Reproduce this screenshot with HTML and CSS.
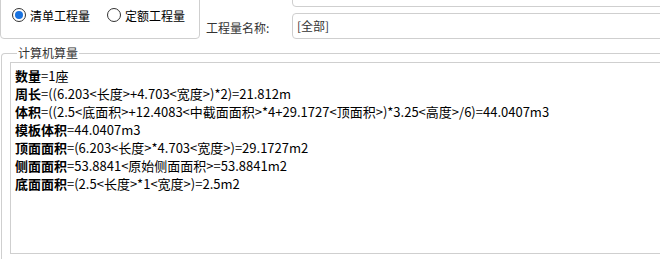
FILE: index.html
```html
<!DOCTYPE html>
<html lang="zh-CN">
<head>
  <meta charset="UTF-8" />
  <title>计算机算量</title>
  <link rel="stylesheet" href="styles.css">
</head>
<body>
  <div class="top-row">
    <div class="radio-box">
      <label class="radio"><span class="dot checked"></span>清单工程量</label>
      <label class="radio"><span class="dot"></span>定额工程量</label>
    </div>
    <div class="name-label">工程量名称:</div>
    <div class="inputs">
      <div class="field field-top"></div>
      <div class="field">[全部]</div>
    </div>
  </div>

  <fieldset class="calc-group">
    <legend>计算机算量</legend>
    <div class="calc-box">
      <div class="line"><b>数量</b>=1座</div>
      <div class="line"><b>周长</b>=((6.203&lt;长度&gt;+4.703&lt;宽度&gt;)*2)=21.812m</div>
      <div class="line"><b>体积</b>=((2.5&lt;底面积&gt;+12.4083&lt;中截面面积&gt;*4+29.1727&lt;顶面积&gt;)*3.25&lt;高度&gt;/6)=44.0407m3</div>
      <div class="line"><b>模板体积</b>=44.0407m3</div>
      <div class="line"><b>顶面面积</b>=(6.203&lt;长度&gt;*4.703&lt;宽度&gt;)=29.1727m2</div>
      <div class="line"><b>侧面面积</b>=53.8841&lt;原始侧面面积&gt;=53.8841m2</div>
      <div class="line"><b>底面面积</b>=(2.5&lt;长度&gt;*1&lt;宽度&gt;)=2.5m2</div>
    </div>
  </fieldset>
</body>
</html>
```

FILE: styles.css
```css
* {
  box-sizing: border-box;
}

html, body {
  margin: 0;
  width: 660px;
  height: 259px;
  overflow: hidden;
  background: #fff;
}

body {
  font-family: "Noto Sans CJK SC", "Microsoft YaHei", sans-serif;
  font-size: 12px;
  color: #000;
}

.top-row {
  display: flex;
  align-items: flex-start;
  height: 46px;
}

.radio-box {
  width: 200px;
  height: 49px;
  margin-top: -10px;
  padding: 16px 0 0 11px;
  border: 1px solid #cfcfcf;
  border-radius: 4px;
  display: flex;
  gap: 17px;
  flex-shrink: 0;
}

.radio {
  display: flex;
  align-items: center;
  gap: 4px;
  height: 16px;
}

.dot {
  width: 14px;
  height: 14px;
  border: 1px solid #333;
  border-radius: 50%;
  background: #fff;
  display: flex;
  align-items: center;
  justify-content: center;
}

.dot.checked::after {
  content: "";
  width: 8px;
  height: 8px;
  border-radius: 50%;
  background: #1a73e0;
}

.name-label {
  width: 92px;
  padding: 19px 0 0 6px;
  color: #333;
  flex-shrink: 0;
}

.inputs {
  flex: 1;
  display: flex;
  flex-direction: column;
  gap: 6px;
  margin-top: -20px;
  margin-right: -10px;
}

.field {
  height: 26px;
  border: 1px solid #cfcfcf;
  border-radius: 4px;
  padding: 4px 4px;
  color: #333;
  line-height: 16px;
}

.field-top {
  height: 27px;
}

.calc-group {
  margin: 0 -10px 0 1px;
  padding: 2px 0 0 8px;
  border: 1px solid #cfcfcf;
  border-bottom: none;
  border-radius: 4px 4px 0 0;
  height: 213px;
}

.calc-group legend {
  padding: 0 1px;
  margin-left: 7px;
  color: #333;
  line-height: 14px;
}

.calc-box {
  border: 1px solid #cfcfcf;
  border-right: none;
  height: 192px;
  padding: 4px 4px;
  font-size: 13px;
  line-height: 18px;
}

.line {
  white-space: nowrap;
}
```
